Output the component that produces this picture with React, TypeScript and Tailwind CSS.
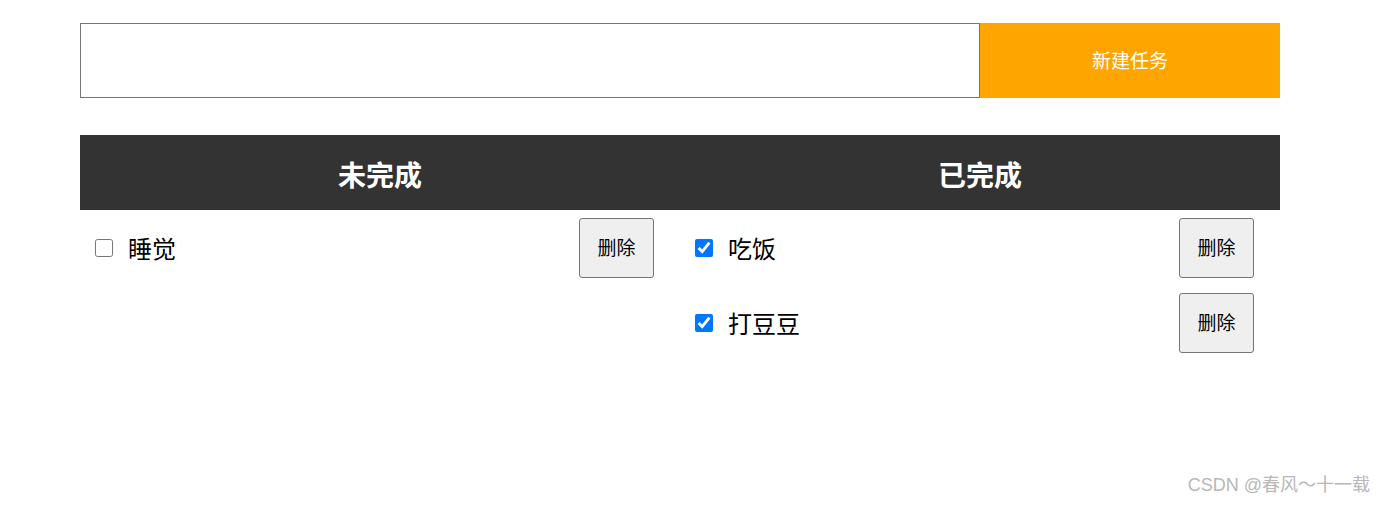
import { useState } from "react";

// Typing
interface Todo {
  id: number;
  title: string;
  done: boolean;
}

const initialTodos: Todo[] = [
  { id: 1, title: "睡觉", done: false },
  { id: 2, title: "吃饭", done: true },
  { id: 3, title: "打豆豆", done: true },
];

const font = "font-['Noto_Sans_CJK_SC','Microsoft_YaHei',sans-serif]";

const TodoItem = ({
  todo,
  onToggle,
  onDelete,
}: {
  todo: Todo;
  onToggle: () => void;
  onDelete: () => void;
}) => (
  <li className="h-[75px] flex items-center pl-[15px] pr-[26px]">
    <input
      type="checkbox"
      checked={todo.done}
      onChange={onToggle}
      className="w-[18px] h-[18px] m-0 accent-[#0075ff]"
    />
    <span className="ml-[15px] text-[24px] text-black leading-none flex-1">{todo.title}</span>
    <button
      onClick={onDelete}
      className="w-[75px] h-[60px] bg-[#efefef] border border-[#767676] rounded-[3px] text-[19px] text-black"
    >
      删除
    </button>
  </li>
);

export default function App() {
  const [todos, setTodos] = useState<Todo[]>(initialTodos);
  const [text, setText] = useState("");

  const addTodo = () => {
    if (!text.trim()) return;
    setTodos([...todos, { id: Date.now(), title: text, done: false }]);
    setText("");
  };
  const toggle = (id: number) =>
    setTodos(todos.map((t) => (t.id === id ? { ...t, done: !t.done } : t)));
  const remove = (id: number) => setTodos(todos.filter((t) => t.id !== id));

  const columns = [
    { title: "未完成", items: todos.filter((t) => !t.done) },
    { title: "已完成", items: todos.filter((t) => t.done) },
  ];

  return (
    <div className={`relative w-[1385px] h-[507px] bg-white ${font}`}>
      <div className="w-[1200px] ml-[80px] pt-[23px]">
        <div className="flex h-[75px]">
          <input
            value={text}
            onChange={(e) => setText(e.target.value)}
            className="w-[900px] h-full border border-[#767676] outline-none px-2 text-[20px]"
          />
          <button
            onClick={addTodo}
            className="w-[300px] h-full bg-[#ffa500] text-white text-[19px]"
          >
            新建任务
          </button>
        </div>

        <div className="mt-[37px] grid grid-cols-2">
          {columns.map((col) => (
            <div key={col.title}>
              <h2 className="h-[75px] pt-[3px] bg-[#333333] flex items-center justify-center text-white text-[28px] font-bold">
                {col.title}
              </h2>
              <ul>
                {col.items.map((t) => (
                  <TodoItem
                    key={t.id}
                    todo={t}
                    onToggle={() => toggle(t.id)}
                    onDelete={() => remove(t.id)}
                  />
                ))}
              </ul>
            </div>
          ))}
        </div>
      </div>

      <div className="absolute right-[15px] bottom-[8px] text-[18px] text-[#b8b8b8] font-['Liberation_Sans','Noto_Sans_CJK_SC',sans-serif]">
        CSDN @春风～十一载
      </div>
    </div>
  );
}
